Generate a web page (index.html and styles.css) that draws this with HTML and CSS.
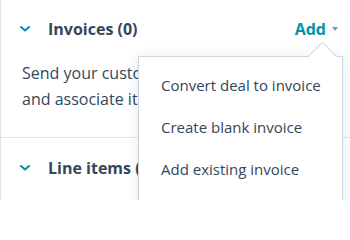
FILE: index.html
```html
<!DOCTYPE html>
<html>
<head>
<meta charset="utf-8">
<link rel="stylesheet" href="styles.css">
</head>
<body>
<div class="panel">
  <section class="card">
    <div class="card-header">
      <svg class="chevron" width="10" height="6" viewBox="0 0 10 6"><path d="M1 1 L5 4.6 L9 1" fill="none" stroke="#0091ae" stroke-width="2" stroke-linecap="round" stroke-linejoin="round"/></svg>
      <h2 class="title">Invoices (0)</h2>
      <button class="add">Add<svg class="caret-down" width="6" height="4" viewBox="0 0 6 4"><path d="M0 0 L6 0 L3 4 Z" fill="#7c98b6"/></svg></button>
    </div>
    <p class="desc">Send your customer an invoice and associate it with this deal.</p>
  </section>
  <section class="card card-second">
    <div class="card-header">
      <svg class="chevron" width="10" height="6" viewBox="0 0 10 6"><path d="M1 1 L5 4.6 L9 1" fill="none" stroke="#0091ae" stroke-width="2" stroke-linecap="round" stroke-linejoin="round"/></svg>
      <h2 class="title">Line items (0)</h2>
    </div>
  </section>
  <div class="menu">
    <div class="menu-item">Convert deal to invoice</div>
    <div class="menu-item">Create blank invoice</div>
    <div class="menu-item">Add existing invoice</div>
  </div>
</div>
</body>
</html>
```

FILE: styles.css
```css
html, body {
  margin: 0;
  padding: 0;
  background: #ffffff;
}
body {
  font-family: "Open Sans", "Liberation Sans", sans-serif;
  color: #33475b;
  width: 350px;
  height: 200px;
  overflow: hidden;
}
.panel {
  position: relative;
  height: 200px;
  border-left: 1px solid #dfe3eb;
  box-sizing: border-box;
}
.card {
  padding: 18px 12px 25px 19px;
}
.card-second {
  border-top: 1px solid #dfe3eb;
  padding-top: 19px;
}
.card-header {
  display: flex;
  align-items: center;
  height: 22px;
}
.chevron {
  display: block;
  margin-right: 18px;
}
.title {
  margin: 0;
  font-size: 16px;
  font-weight: 700;
  line-height: 22px;
  flex: 1;
  white-space: nowrap;
}
.add {
  display: flex;
  align-items: center;
  gap: 6px;
  border: 0;
  background: none;
  padding: 0;
  font-family: inherit;
  font-size: 16px;
  font-weight: 700;
  color: #0091ae;
}
.desc {
  margin: 20px 0 0 2px;
  max-width: 250px;
  font-size: 16px;
  line-height: 26px;
  height: 52px;
  overflow: hidden;
}
.menu {
  position: absolute;
  left: 137px;
  top: 56px;
  width: 205px;
  height: 180px;
  background: #ffffff;
  border: 1px solid #cbd6e2;
  box-shadow: 0 1px 12px rgba(45, 62, 80, 0.12);
  padding-top: 7px;
  box-sizing: border-box;
}
.menu::before {
  content: "";
  position: absolute;
  left: 173px;
  top: -11px;
  width: 20px;
  height: 20px;
  background: #ffffff;
  border-left: 1px solid #cbd6e2;
  border-top: 1px solid #cbd6e2;
  transform: rotate(45deg);
}
.menu-item {
  position: relative;
  height: 42px;
  line-height: 42px;
  padding-left: 22px;
  font-size: 15px;
  white-space: nowrap;
}
```
